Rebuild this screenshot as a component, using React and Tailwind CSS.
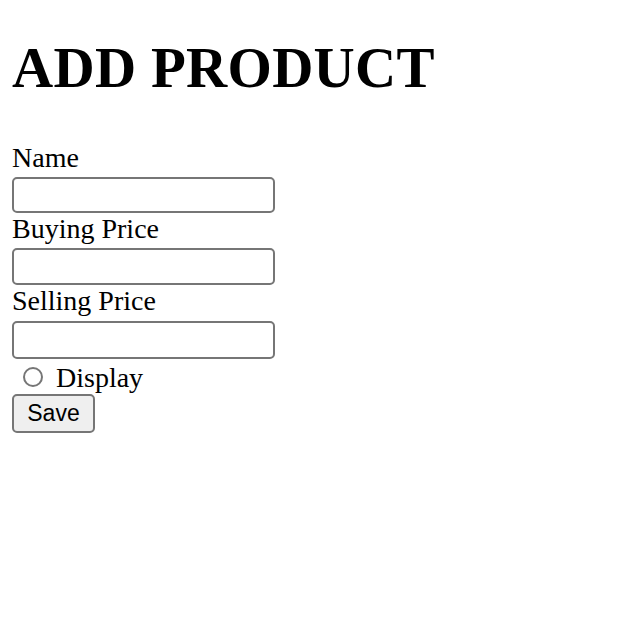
export default function App() {
  return (
    <div className="px-[12px] font-['Liberation_Serif',serif] text-black bg-white min-h-screen">
      <h1 className="pt-[36px] h-[100px] text-[57px] leading-[64px] font-bold tracking-[0.3px]">ADD PRODUCT</h1>
      <form className="flex flex-col pt-[42px]" onSubmit={(e) => e.preventDefault()}>
        <label className="h-[35px] text-[28px] leading-[32px]">Name</label>
        <input type="text" className="w-[263px] h-[36px] border-2 border-[#767676] rounded-[5px] bg-white" />
        <label className="h-[35px] text-[28px] leading-[32px]">Buying Price</label>
        <input type="text" className="w-[263px] h-[37px] border-2 border-[#767676] rounded-[5px] bg-white" />
        <label className="h-[36px] text-[28px] leading-[32px]">Selling Price</label>
        <input type="text" className="w-[263px] h-[38px] border-2 border-[#767676] rounded-[5px] bg-white" />
        <div className="h-[35px] flex items-center">
          <span className="ml-[11px] w-[20px] h-[20px] rounded-full border-2 border-[#767676] bg-white mt-[1px]" />
          <span className="ml-[13px] text-[28px] leading-[32px] mt-[2px]">Display</span>
        </div>
        <button
          type="submit"
          className="w-[83px] h-[39px] border-2 border-[#767676] rounded-[5px] bg-[#efefef] text-[23px] font-['Liberation_Sans',Arial,sans-serif] leading-none text-black"
        >
          Save
        </button>
      </form>
    </div>
  )
}
